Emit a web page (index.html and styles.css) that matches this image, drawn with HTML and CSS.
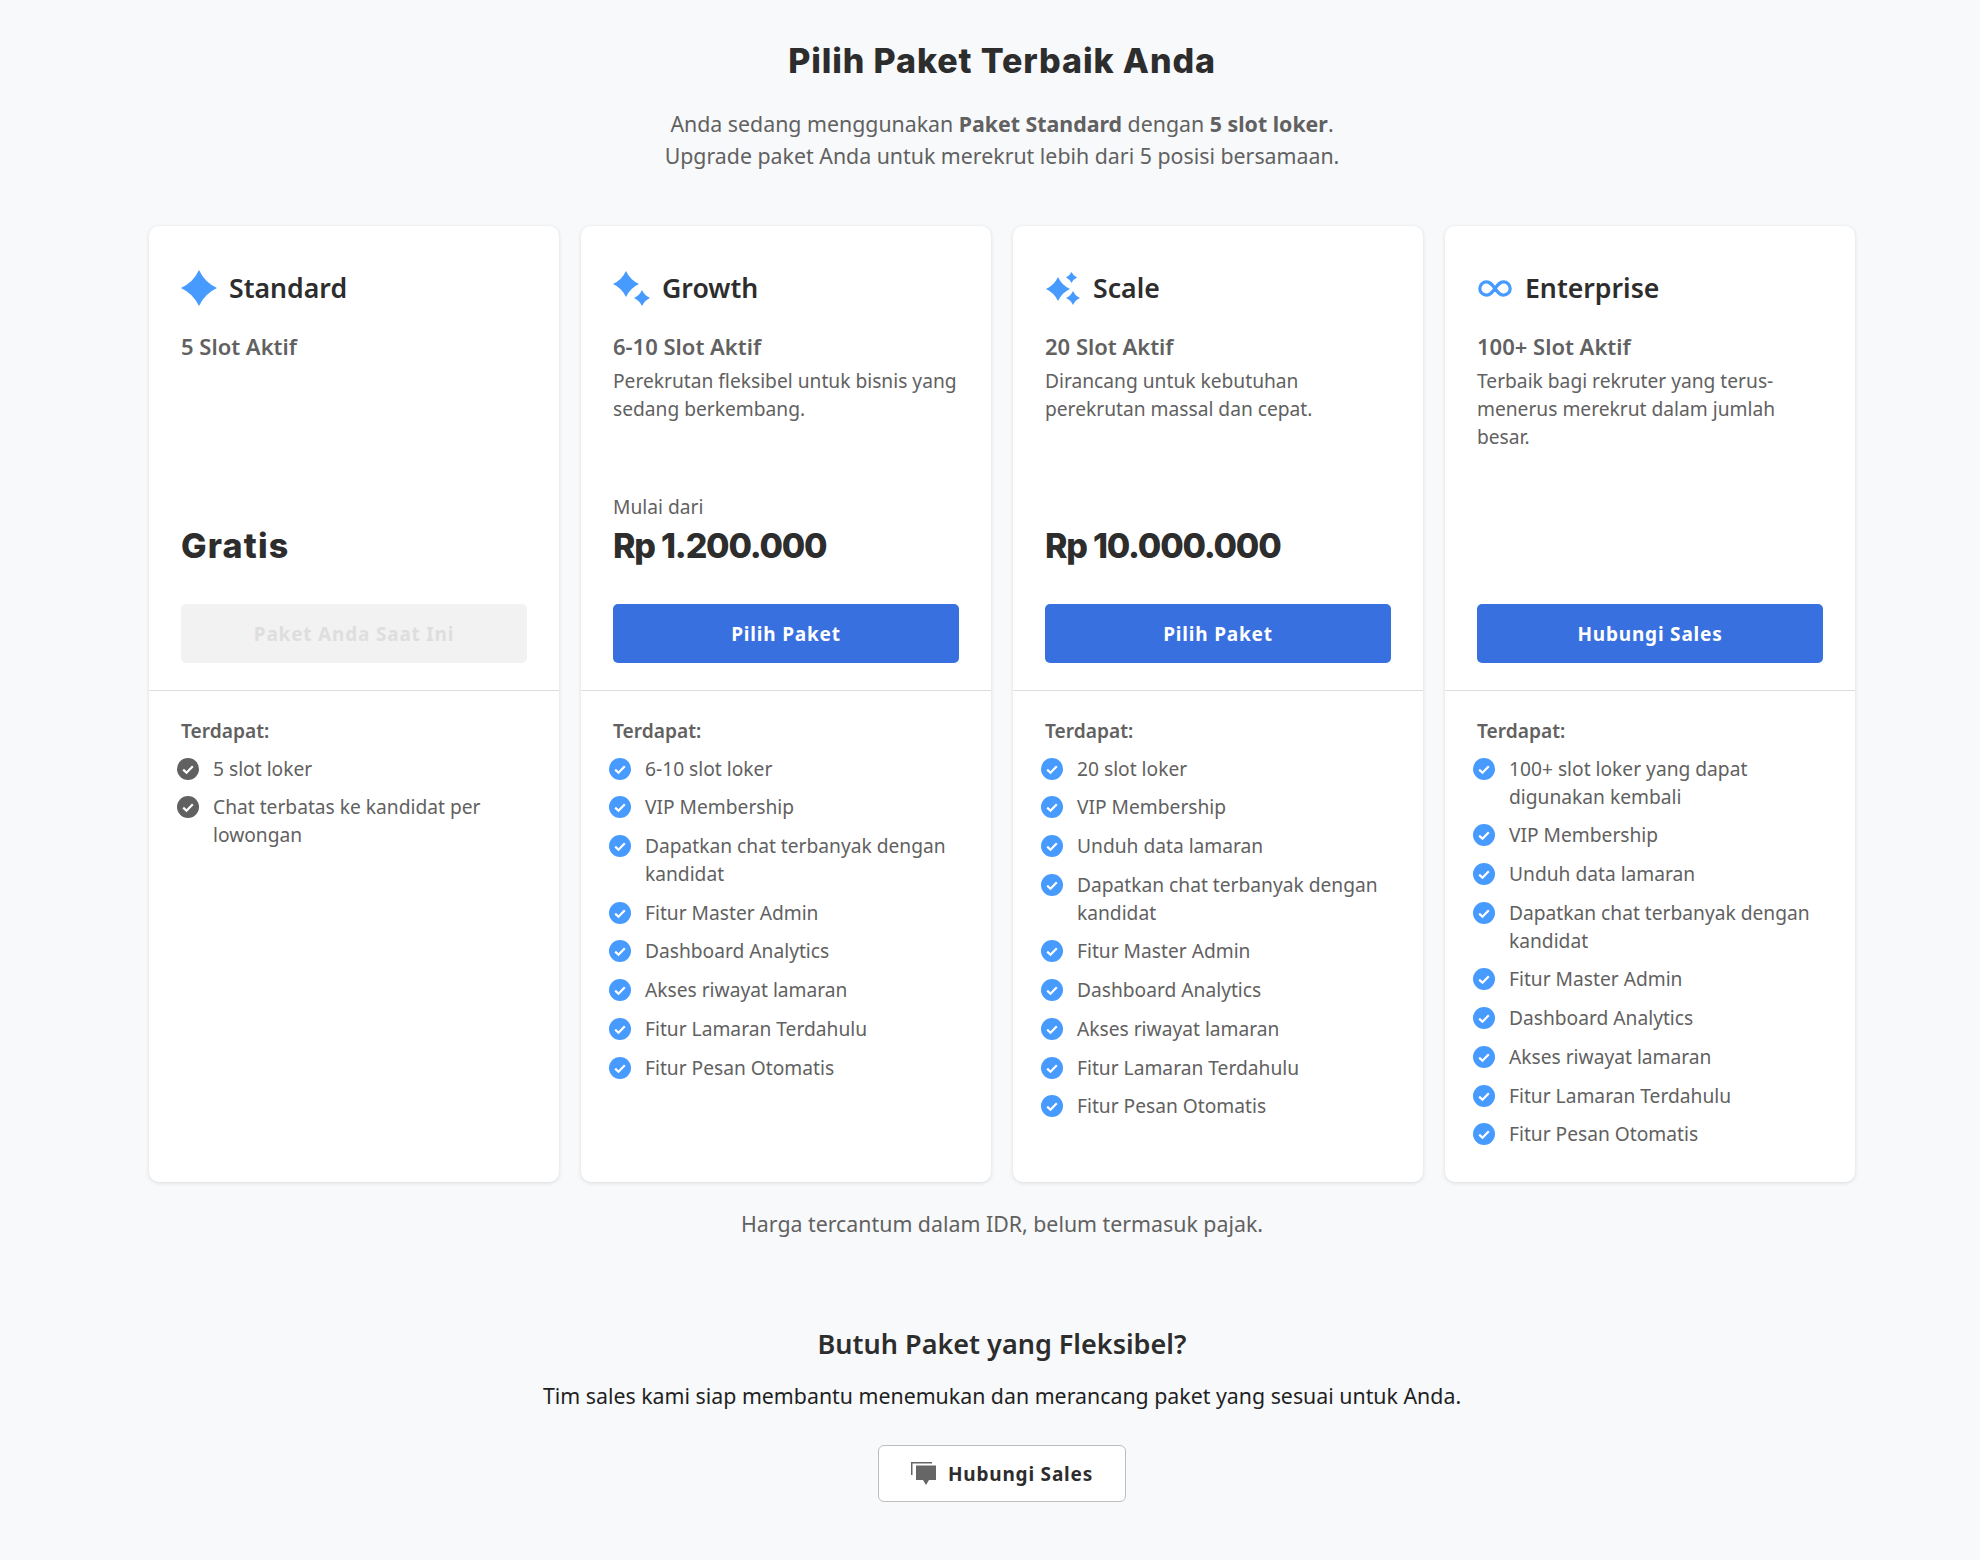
FILE: index.html
```html
<!DOCTYPE html>
<html lang="id">

<head>
    <meta charset="UTF-8">
    <title>Pilih Paket</title>
    <link rel="stylesheet" href="styles.css">
</head>

<body>
    <svg class="defs" width="0" height="0">
        <symbol id="check" viewBox="0 0 22 22">
            <circle cx="11" cy="11" r="11" fill="currentColor" />
            <path d="M6.200 11.600l3.300 3.200 6.300-6.600" fill="none" stroke="#fff" stroke-width="2.200" />
        </symbol>
        <symbol id="star" viewBox="0 0 24 24">
            <path d="M12 0Q15.800 8.200 24 12 15.800 15.800 12 24 8.200 15.800 0 12 8.200 8.200 12 0z" fill="currentColor" />
        </symbol>
    </svg>
    <div class="page">
        <h1>Pilih Paket Terbaik Anda</h1>
        <p class="intro">Anda sedang menggunakan <b>Paket Standard</b> dengan <b>5 slot loker</b>.<br>Upgrade paket Anda untuk merekrut lebih dari 5 posisi bersamaan.</p>

        <div class="plans">
            <div class="plan current">
                <div class="plan-top">
                    <div class="plan-name">
                        <svg class="ic-star" width="36" height="36"><use href="#star" /></svg>
                        <span>Standard</span>
                    </div>
                    <div class="plan-slot">5 Slot Aktif</div>
                    <div class="plan-price free"><b>Gratis</b></div>
                    <button class="btn" disabled>Paket Anda Saat Ini</button>
                </div>
                <div class="plan-features">
                    <div class="label">Terdapat:</div>
                    <ul>
                        <li><svg width="22" height="22"><use href="#check" /></svg>5 slot loker</li>
                        <li><svg width="22" height="22"><use href="#check" /></svg>Chat terbatas ke kandidat per lowongan</li>
                    </ul>
                </div>
            </div>

            <div class="plan">
                <div class="plan-top">
                    <div class="plan-name">
                        <svg class="ic-star" width="37" height="36" viewBox="0 0 37 36">
                            <use href="#star" x="0" y="1" width="26" height="26" />
                            <use href="#star" x="21" y="20" width="16" height="16" />
                        </svg>
                        <span>Growth</span>
                    </div>
                    <div class="plan-slot">6-10 Slot Aktif</div>
                    <p class="plan-desc">Perekrutan fleksibel untuk bisnis yang sedang berkembang.</p>
                    <div class="plan-price">
                        <small>Mulai dari</small>
                        <b>Rp 1.200.000</b>
                    </div>
                    <button class="btn">Pilih Paket</button>
                </div>
                <div class="plan-features">
                    <div class="label">Terdapat:</div>
                    <ul>
                        <li><svg width="22" height="22"><use href="#check" /></svg>6-10 slot loker</li>
                        <li><svg width="22" height="22"><use href="#check" /></svg>VIP Membership</li>
                        <li><svg width="22" height="22"><use href="#check" /></svg>Dapatkan chat terbanyak dengan kandidat</li>
                        <li><svg width="22" height="22"><use href="#check" /></svg>Fitur Master Admin</li>
                        <li><svg width="22" height="22"><use href="#check" /></svg>Dashboard Analytics</li>
                        <li><svg width="22" height="22"><use href="#check" /></svg>Akses riwayat lamaran</li>
                        <li><svg width="22" height="22"><use href="#check" /></svg>Fitur Lamaran Terdahulu</li>
                        <li><svg width="22" height="22"><use href="#check" /></svg>Fitur Pesan Otomatis</li>
                    </ul>
                </div>
            </div>

            <div class="plan">
                <div class="plan-top">
                    <div class="plan-name">
                        <svg class="ic-star" width="36" height="36" viewBox="0 0 36 36">
                            <use href="#star" x="1" y="7" width="24" height="24" />
                            <use href="#star" x="21" y="2" width="11" height="11" />
                            <use href="#star" x="21" y="21" width="14" height="14" />
                        </svg>
                        <span>Scale</span>
                    </div>
                    <div class="plan-slot">20 Slot Aktif</div>
                    <p class="plan-desc">Dirancang untuk kebutuhan perekrutan massal dan cepat.</p>
                    <div class="plan-price"><b>Rp 10.000.000</b></div>
                    <button class="btn">Pilih Paket</button>
                </div>
                <div class="plan-features">
                    <div class="label">Terdapat:</div>
                    <ul>
                        <li><svg width="22" height="22"><use href="#check" /></svg>20 slot loker</li>
                        <li><svg width="22" height="22"><use href="#check" /></svg>VIP Membership</li>
                        <li><svg width="22" height="22"><use href="#check" /></svg>Unduh data lamaran</li>
                        <li><svg width="22" height="22"><use href="#check" /></svg>Dapatkan chat terbanyak dengan kandidat</li>
                        <li><svg width="22" height="22"><use href="#check" /></svg>Fitur Master Admin</li>
                        <li><svg width="22" height="22"><use href="#check" /></svg>Dashboard Analytics</li>
                        <li><svg width="22" height="22"><use href="#check" /></svg>Akses riwayat lamaran</li>
                        <li><svg width="22" height="22"><use href="#check" /></svg>Fitur Lamaran Terdahulu</li>
                        <li><svg width="22" height="22"><use href="#check" /></svg>Fitur Pesan Otomatis</li>
                    </ul>
                </div>
            </div>

            <div class="plan">
                <div class="plan-top">
                    <div class="plan-name">
                        <svg class="ic-star" width="36" height="36" viewBox="0 0 36 36">
                            <path d="M18 18.500c-2.900-3.900-4.800-6.700-8.500-6.700a6.700 6.700 0 0 0 0 13.400c3.700 0 5.600-2.800 8.500-6.700s4.800-6.700 8.500-6.700a6.700 6.700 0 0 1 0 13.400c-3.700 0-5.600-2.800-8.500-6.700z" fill="none" stroke="currentColor" stroke-width="3.200" />
                        </svg>
                        <span>Enterprise</span>
                    </div>
                    <div class="plan-slot">100+ Slot Aktif</div>
                    <p class="plan-desc">Terbaik bagi rekruter yang terus-menerus merekrut dalam jumlah besar.</p>
                    <div class="plan-price"></div>
                    <button class="btn">Hubungi Sales</button>
                </div>
                <div class="plan-features">
                    <div class="label">Terdapat:</div>
                    <ul>
                        <li><svg width="22" height="22"><use href="#check" /></svg>100+ slot loker yang dapat digunakan kembali</li>
                        <li><svg width="22" height="22"><use href="#check" /></svg>VIP Membership</li>
                        <li><svg width="22" height="22"><use href="#check" /></svg>Unduh data lamaran</li>
                        <li><svg width="22" height="22"><use href="#check" /></svg>Dapatkan chat terbanyak dengan kandidat</li>
                        <li><svg width="22" height="22"><use href="#check" /></svg>Fitur Master Admin</li>
                        <li><svg width="22" height="22"><use href="#check" /></svg>Dashboard Analytics</li>
                        <li><svg width="22" height="22"><use href="#check" /></svg>Akses riwayat lamaran</li>
                        <li><svg width="22" height="22"><use href="#check" /></svg>Fitur Lamaran Terdahulu</li>
                        <li><svg width="22" height="22"><use href="#check" /></svg>Fitur Pesan Otomatis</li>
                    </ul>
                </div>
            </div>
        </div>

        <p class="note">Harga tercantum dalam IDR, belum termasuk pajak.</p>

        <div class="contact">
            <h2>Butuh Paket yang Fleksibel?</h2>
            <p>Tim sales kami siap membantu menemukan dan merancang paket yang sesuai untuk Anda.</p>
            <button class="btn-outline">
                <svg width="25" height="23" viewBox="0 0 25 23">
                    <path d="M0 0h21v1.500H1.500V13H0z" fill="#666" />
                    <path d="M5 3.500h20V18h-7l-3 5-3-5H5z" fill="#666" />
                </svg>
                Hubungi Sales
            </button>
        </div>
    </div>
</body>

</html>
```

FILE: styles.css
```css
* {
    box-sizing: border-box;
}

body {
    margin: 0;
    background: #f8f9fb;
    color: #616161;
    font-family: "Noto Sans", sans-serif;
}

.defs {
    position: absolute;
}

.page {
    margin-left: 24px;
    padding: 37px 0 30px;
    text-align: center;
}

h1 {
    margin: 0;
    height: 48px;
    color: #2d2d2d;
    font-family: Inter, sans-serif;
    font-size: 34px;
    font-weight: 800;
    line-height: 48px;
    letter-spacing: .9px;
}

.intro {
    margin: 23px 0 0;
    font-size: 21.33px;
    line-height: 32px;
}

.plans {
    display: grid;
    grid-template-columns: repeat(4, 410px);
    gap: 22px;
    justify-content: center;
    margin-top: 54px;
    text-align: left;
}

.plan {
    display: flex;
    flex-direction: column;
    height: 956px;
    background: #fff;
    border-radius: 10px;
    box-shadow: 0 1px 4px rgba(0, 0, 0, .12);
}

.plan-top {
    display: flex;
    flex-direction: column;
    height: 465px;
    padding: 44px 32px 27px;
    border-bottom: 1px solid #dedede;
}

.plan-name {
    display: flex;
    align-items: center;
    gap: 12px;
    height: 36px;
    color: #2d2d2d;
    font-size: 26.67px;
    font-weight: 600;
}

.plan-name span {
    margin-bottom: 2px;
}

.ic-star {
    color: #479bff;
    flex: none;
}

.plan-slot {
    margin-top: 25px;
    font-size: 22px;
    font-weight: 600;
    line-height: 30px;
}

.plan-desc {
    margin: 6px 0 0;
    font-size: 19.2px;
    line-height: 28px;
}

.plan-price {
    margin-top: auto;
    margin-bottom: 33px;
}

.plan-price small {
    display: block;
    font-size: 19.2px;
    line-height: 28px;
}

.plan-price b {
    display: block;
    color: #2d2d2d;
    font-family: Inter, sans-serif;
    font-size: 34px;
    font-weight: 800;
    line-height: 50px;
    letter-spacing: -1.2px;
}

.plan-price.free b {
    letter-spacing: 1.2px;
}

.btn {
    flex: none;
    height: 59px;
    background: #3870e0;
    color: #fff;
    border: none;
    border-radius: 5px;
    font: 700 19px "Noto Sans", sans-serif;
    letter-spacing: .8px;
}

.btn[disabled] {
    background: #f2f2f2;
    color: #dedede;
}

.plan-features {
    padding: 26px 32px;
}

.label {
    height: 27px;
    font-size: 19.2px;
    font-weight: 600;
    line-height: 28px;
}

.plan ul {
    margin: 0 0 0 -4px;
    padding: 0;
    list-style: none;
}

.plan li {
    position: relative;
    margin-top: 10.7px;
    padding-left: 36px;
    font-size: 19.2px;
    line-height: 28px;
}

.plan li svg {
    position: absolute;
    left: 0;
    top: 3px;
    color: #479bff;
}

.current li svg {
    color: #616161;
}

.note {
    margin: 27px 0 0;
    font-size: 21.33px;
    line-height: 30px;
}

.contact {
    margin-top: 87px;
}

.contact h2 {
    margin: 0;
    color: #2d2d2d;
    font-size: 27px;
    font-weight: 600;
    line-height: 36px;
}

.contact p {
    margin: 19px 0 0;
    color: #1f1f1f;
    font-size: 21.33px;
    line-height: 30px;
}

.btn-outline {
    display: inline-flex;
    align-items: center;
    justify-content: center;
    gap: 12px;
    width: 248px;
    height: 57px;
    margin-top: 34px;
    background: #fff;
    color: #2d2d2d;
    border: 1px solid #bdbdbd;
    border-radius: 6px;
    font: 700 19px "Noto Sans", sans-serif;
    letter-spacing: .8px;
}
```
